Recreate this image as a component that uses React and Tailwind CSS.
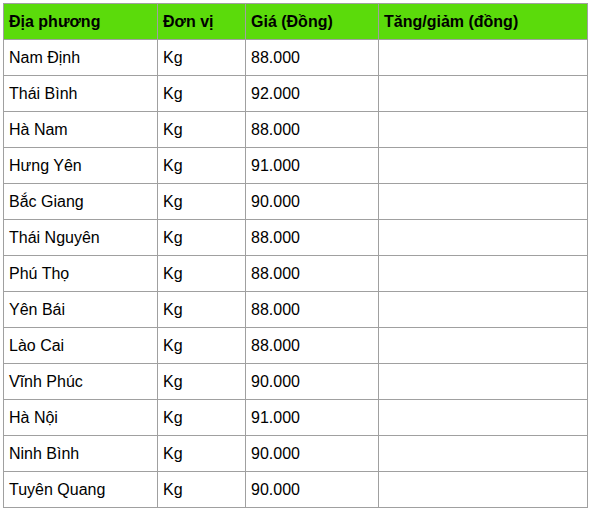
import React from "react";

const rows = [
  ["Nam Định", "Kg", "88.000"],
  ["Thái Bình", "Kg", "92.000"],
  ["Hà Nam", "Kg", "88.000"],
  ["Hưng Yên", "Kg", "91.000"],
  ["Bắc Giang", "Kg", "90.000"],
  ["Thái Nguyên", "Kg", "88.000"],
  ["Phú Thọ", "Kg", "88.000"],
  ["Yên Bái", "Kg", "88.000"],
  ["Lào Cai", "Kg", "88.000"],
  ["Vĩnh Phúc", "Kg", "90.000"],
  ["Hà Nội", "Kg", "91.000"],
  ["Ninh Bình", "Kg", "90.000"],
  ["Tuyên Quang", "Kg", "90.000"],
];

export default function App() {
  return (
    <div className="bg-white w-[591px] h-[512px] pt-[3px] pl-[3px]" style={{ fontFamily: '"Liberation Sans", Arial, sans-serif' }}>
      <table className="border-collapse text-[16px] leading-[18px] text-black w-[584px] table-fixed">
        <colgroup>
          <col className="w-[154px]" />
          <col className="w-[88px]" />
          <col className="w-[133px]" />
          <col className="w-[209px]" />
        </colgroup>
        <thead>
          <tr className="bg-[#5bdb0b] h-[36px]">
            <th className="border border-[#a0a0a0] text-left font-bold px-[5px] py-0">Địa phương</th>
            <th className="border border-[#a0a0a0] text-left font-bold px-[5px] py-0">Đơn vị</th>
            <th className="border border-[#a0a0a0] text-left font-bold px-[5px] py-0">Giá (Đồng)</th>
            <th className="border border-[#a0a0a0] text-left font-bold px-[5px] py-0">Tăng/giảm (đồng)</th>
          </tr>
        </thead>
        <tbody>
          {rows.map((r) => (
            <tr key={r[0]} className="h-[36px]">
              <td className="border border-[#a0a0a0] px-[5px] py-0">{r[0]}</td>
              <td className="border border-[#a0a0a0] px-[5px] py-0">{r[1]}</td>
              <td className="border border-[#a0a0a0] px-[5px] py-0">{r[2]}</td>
              <td className="border border-[#a0a0a0] px-[5px] py-0"></td>
            </tr>
          ))}
        </tbody>
      </table>
    </div>
  );
}
